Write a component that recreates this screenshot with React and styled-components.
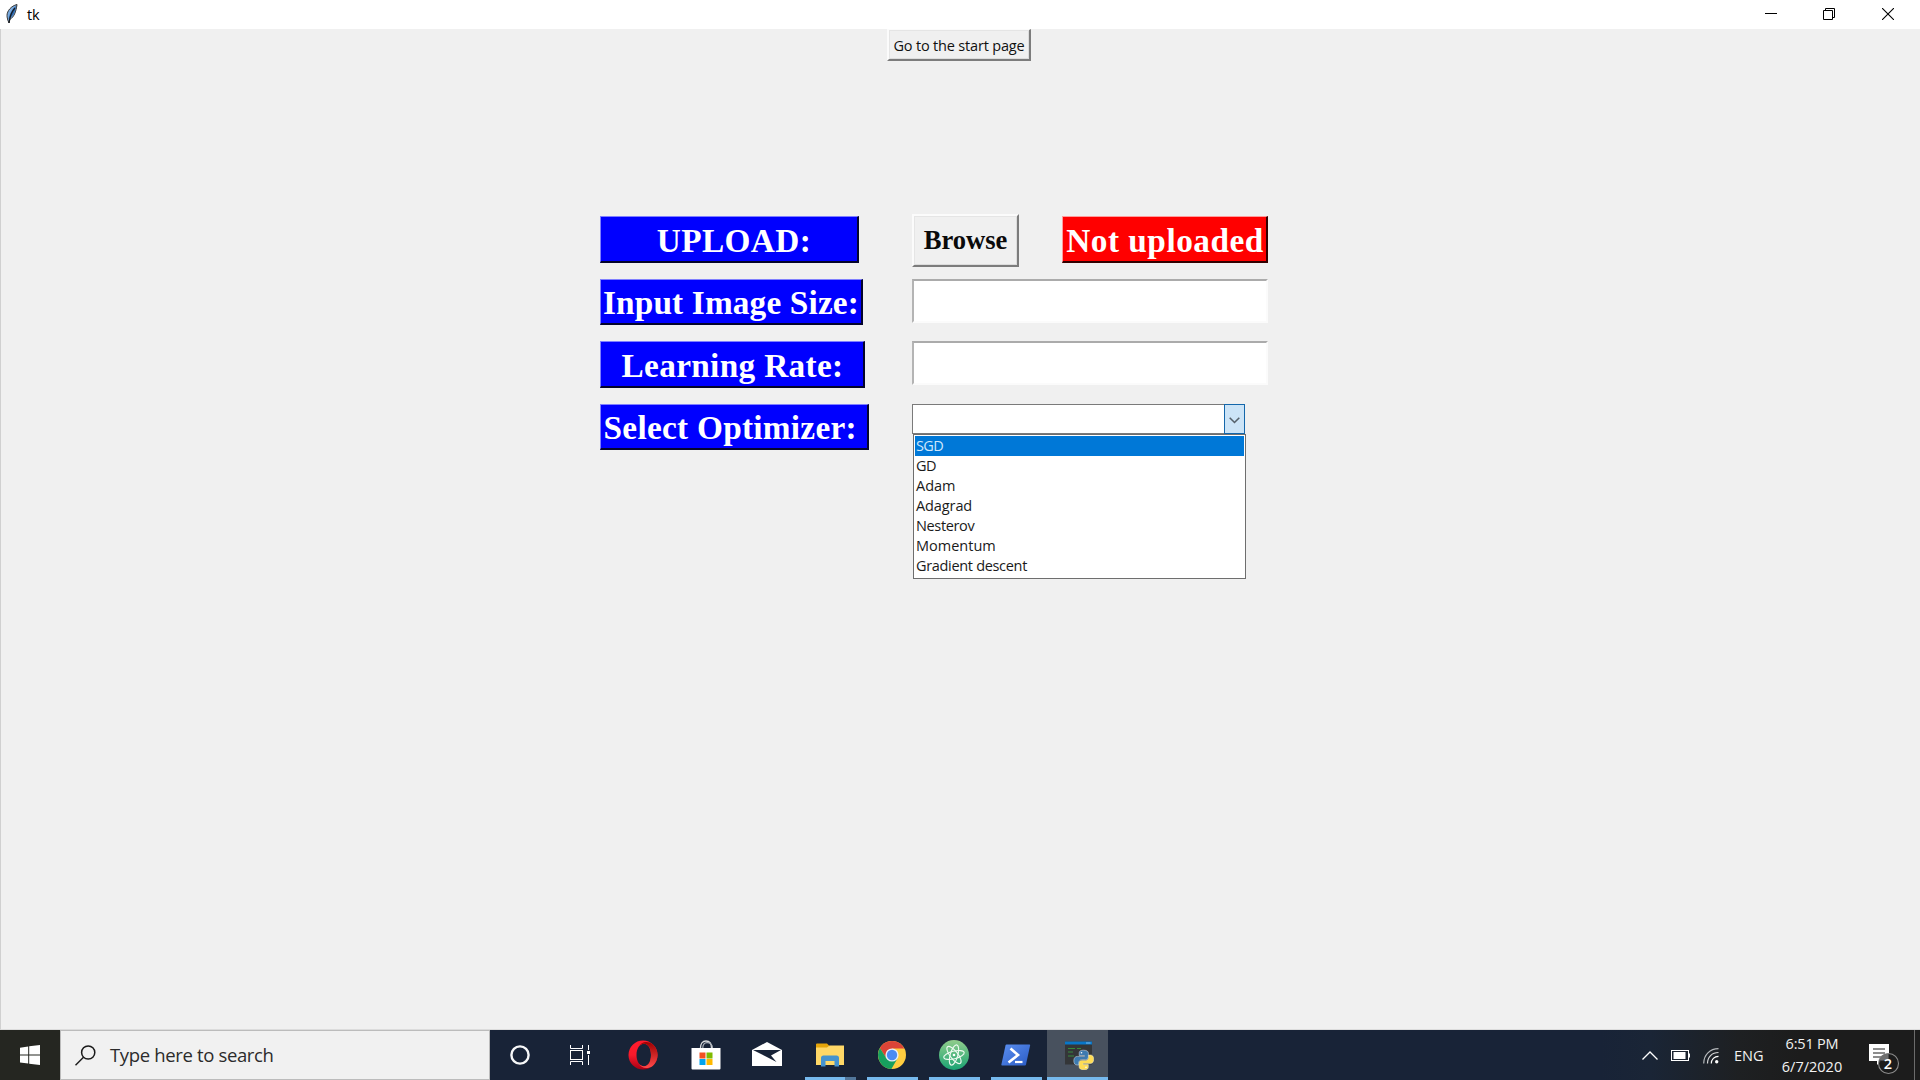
import React from "react";
import styled, { createGlobalStyle, css } from "styled-components";

const Global = createGlobalStyle`
  * { box-sizing: border-box; }
  html, body { margin: 0; padding: 0; overflow: hidden; }
  body { font-family: "Open Sans", "Noto Sans", sans-serif; background: #f0f0f0; }
  svg { display: block; flex: none; }
`;

const Screen = styled.div`
  width: 1920px;
  height: 1080px;
  display: flex;
  flex-direction: column;
  background: #f0f0f0;
`;

const TitleBar = styled.header`
  height: 29px;
  flex: none;
  display: flex;
  align-items: flex-start;
  justify-content: space-between;
  background: #fff;
  padding: 0 2px 0 5px;
`;

const TitleName = styled.div`
  display: flex;
  align-items: center;
  gap: 9px;
  height: 28px;
  font-size: 14.5px;
  line-height: 20px;
  letter-spacing: -0.2px;
  color: #000;
`;

const TitleText = styled.span`
  padding-top: 1px;
`;

const WindowControls = styled.div`
  display: flex;
`;

const ControlButton = styled.div`
  width: ${(p) => p.$w}px;
  height: 28px;
  display: flex;
  align-items: center;
  justify-content: center;
`;

const Client = styled.main`
  flex: 1;
  min-height: 0;
  border-left: 1px solid #d0d0d0;
  border-bottom: 1px solid #dcdcdc;
  display: flex;
  flex-direction: column;
`;

const raised = css`
  border-style: solid;
  border-width: 2px;
  border-color: #fbfbfb #7c7c7c #7c7c7c #fbfbfb;
  box-shadow: inset 1px 1px 0 #e5e5e5, inset -1px -1px 0 #dcdcdc;
`;

const StartPageButton = styled.button`
  ${raised}
  margin: 0 0 0 886px;
  width: 144px;
  height: 32px;
  flex: none;
  padding: 1px 0 0;
  border-top-width: 1px;
  border-radius: 0;
  background: #f0f0f0;
  font-family: inherit;
  font-size: 14.5px;
  letter-spacing: ${(p) => p.$spacing}px;
  white-space: nowrap;
  color: #111;
`;

const Form = styled.section`
  margin: 153px 0 0 599px;
  display: grid;
  grid-template-columns: 312px 356px;
  grid-template-rows: 65px 62px 63px 180px;
`;

const Cell = styled.div`
  padding-top: ${(p) => p.$top || 0}px;
  display: flex;
  align-items: flex-start;
`;

const Tag = styled.div`
  width: ${(p) => p.$w}px;
  height: ${(p) => p.$h || 46}px;
  flex: none;
  display: flex;
  align-items: center;
  justify-content: center;
  border-style: solid;
  border-width: 1px 2px 2px 1px;
  border-color: ${(p) => (p.$red ? "#ff9c9c #300 #300 #ff9c9c" : "#8080ff #04042c #04042c #8080ff")};
  background: ${(p) => (p.$red ? "#ff0000" : "#0000ff")};
  color: #fff;
  font-family: "Liberation Serif", serif;
  font-weight: bold;
  font-size: 33.3px;
  line-height: 42px;
  letter-spacing: ${(p) => p.$spacing || 0}px;
  white-space: pre;
  padding: ${(p) => p.$padTop || 2}px 0 0 ${(p) => p.$padLeft || 0}px;
`;

const UploadRow = styled(Cell)`
  justify-content: space-between;
`;

const BrowseButton = styled.button`
  ${raised}
  width: 107px;
  height: 53px;
  padding: 0 0 1px;
  border-radius: 0;
  background: #f0f0f0;
  font-family: "Liberation Serif", serif;
  font-weight: bold;
  font-size: 26.6px;
  color: #0a0a0a;
`;

const Entry = styled.input`
  width: 356px;
  height: 44px;
  border-style: solid;
  border-width: 2px;
  border-color: #ababab #fbfbfb #fbfbfb #b4b4b4;
  border-radius: 0;
  background: #fff;
  outline: none;
`;

const Combo = styled.div`
  display: flex;
  flex-direction: column;
  width: 334px;
`;

const ComboField = styled.div`
  width: 333px;
  height: 30px;
  display: flex;
  justify-content: flex-end;
  background: #fff;
  border: 1px solid #7a7a7a;
`;

const ComboArrow = styled.div`
  width: 21px;
  height: 30px;
  margin: -1px -1px 0 0;
  padding: 2px 1px 0 0;
  border: 1px solid #1467ab;
  background: #cce4f7;
  display: flex;
  align-items: center;
  justify-content: center;
`;

const Options = styled.ul`
  list-style: none;
  margin: 0 0 0 1px;
  width: 333px;
  height: 145px;
  padding: 1px;
  border: 1px solid #6e6e6e;
  background: #fff;
`;

const Option = styled.li`
  height: 20px;
  padding-left: 1px;
  font-size: 14.5px;
  line-height: 20px;
  letter-spacing: ${(p) => p.$spacing}px;
  white-space: nowrap;
  color: ${(p) => (p.$active ? "#cfe7fb" : "#1a1a1a")};
  background: ${(p) => (p.$active ? "#0078d7" : "transparent")};
`;

const Taskbar = styled.footer`
  height: 50px;
  flex: none;
  display: flex;
  background: linear-gradient(90deg, #182337 0, #182337 1600px, #1a2536 1650px, #1e2022 1740px, #1c1c1c 1800px);
`;

const StartButton = styled.div`
  width: 60px;
  display: flex;
  align-items: center;
  justify-content: center;
  background: #252621;
`;

const SearchBox = styled.div`
  width: 430px;
  display: flex;
  align-items: center;
  gap: 14px;
  padding-left: 14px;
  border: 1px solid #bcbcbc;
  background: #f1f1f1;
  color: #2b2b2b;
  font-size: 18.5px;
  letter-spacing: -0.35px;
`;

const SearchHint = styled.span`
  padding-bottom: 2px;
`;

const TaskSlot = styled.div`
  width: ${(p) => p.$w || 62}px;
  height: 50px;
  display: flex;
  flex-direction: column;
  align-items: center;
  background: ${(p) => (p.$active ? "#48515e" : "transparent")};
`;

const SlotIcon = styled.div`
  height: 47px;
  padding: 3px 0 0 ${(p) => (p.$active ? 2 : 0)}px;
  display: flex;
  align-items: center;
`;

const Running = styled.div`
  width: ${(p) => (p.$active ? 61 : 51)}px;
  height: 3px;
  background: ${(p) => (p.$stacked ? "linear-gradient(90deg, #76b9ed 40px, #52779b 40px)" : "#76b9ed")};
`;

const Tray = styled.div`
  margin-left: auto;
  display: flex;
  align-items: center;
  color: #f2f2f2;
`;

const TrayIcon = styled.div`
  width: ${(p) => p.$w}px;
  padding-top: ${(p) => p.$top || 0}px;
`;

const Language = styled.div`
  width: 46px;
  font-size: 14.5px;
  letter-spacing: 0;
`;

const Clock = styled.div`
  width: 64px;
  margin-right: 25px;
  padding-bottom: 1px;
  display: flex;
  flex-direction: column;
  align-items: center;
  font-size: 14.5px;
  line-height: 23px;
  white-space: nowrap;
`;

const ClockLine = styled.span`
  letter-spacing: ${(p) => p.$spacing}px;
`;

const Peek = styled.div`
  width: 6px;
  height: 50px;
  border-left: 1px solid #6b6b6b;
`;

const Feather = () => (
  <svg width="13" height="20" viewBox="0 0 13 20">
    <path d="M12 .5C6 2 2 7 2 11.500c0 2 .5 3 .8 4.500L4 19l.8-3.500C9 13 11 8 12 .5Z" fill="#79aade" stroke="#343434" strokeWidth="1" />
    <path d="M11 2C7 5 5 9 3.500 15c4-2 6.500-6 7.500-13Z" fill="#2966ae" />
    <path d="M10 4C7 7 5 11 4 19" stroke="#15191f" strokeWidth="1.200" fill="none" />
  </svg>
);

const WinLogo = () => (
  <svg width="20" height="20" viewBox="0 0 20 20" fill="#fff">
    <path d="M0 2.700 8.200 1.500V9.500H0ZM9.200 1.350 20 0V9.500H9.200ZM0 10.500H8.200V18.600L0 17.400ZM9.200 10.500H20V20L9.200 18.700Z" />
  </svg>
);

const SearchIcon = () => (
  <svg width="21" height="21" viewBox="0 0 21 21" fill="none" stroke="#1a1a1a" strokeWidth="1.500">
    <circle cx="13.200" cy="7.500" r="6.600" />
    <path d="M8.500 12.200.500 20.200" />
  </svg>
);

const Cortana = () => (
  <svg width="20" height="20" viewBox="0 0 20 20">
    <circle cx="10" cy="10" r="8.600" fill="none" stroke="#f6f7f8" strokeWidth="2.400" />
  </svg>
);

const TaskView = () => (
  <svg width="20" height="20" viewBox="0 0 20 20" fill="none" stroke="#fff" strokeWidth="1">
    <path d="M.5 0V3.500H12.500V0M.5 20V16.500H12.500V20" />
    <rect x=".5" y="5.500" width="12" height="9" />
    <path d="M18.500 0V5M18.500 10V20" />
    <rect x="17" y="6" width="3" height="3" fill="#fff" stroke="none" />
  </svg>
);

const Opera = () => (
  <svg width="30" height="30" viewBox="0 0 30 30">
    <defs>
      <linearGradient id="opA" x1="0" y1="0" x2="0" y2="1">
        <stop offset="0" stopColor="#ff1b2d" />
        <stop offset=".5" stopColor="#f81a2b" />
        <stop offset="1" stopColor="#a70014" />
      </linearGradient>
      <linearGradient id="opB" x1="0" y1="0" x2="0" y2="1">
        <stop offset="0" stopColor="#9c0000" />
        <stop offset="1" stopColor="#ff4b4b" />
      </linearGradient>
    </defs>
    <path fillRule="evenodd" fill="url(#opA)" d="M15 .5a14.500 14.500 0 1 0 0 29 14.500 14.500 0 0 0 0-29Zm1 3.300c4.500 0 7 5 7 11.200s-2.500 11.200-7 11.200S8.500 21.200 8.500 15 11.500 3.800 16 3.800Z" />
    <path fill="url(#opB)" d="M10.500 6.500C12 4.600 14 3.800 16 3.800c4.500 0 7 5 7 11.200s-2.500 11.200-7 11.200c-2 0-4-.8-5.500-2.700 2.500 4.300 8.500 6.300 14.200 2.400A14.500 14.500 0 0 0 24.700 4.200C19 0 13 2.200 10.500 6.500Z" />
  </svg>
);

const Store = () => (
  <svg width="30" height="30" viewBox="0 0 30 30">
    <path d="M9.500 8C9.500 3.500 11.500 1 15 1s5.500 2.500 5.500 7" fill="none" stroke="#d8dadd" strokeWidth="1.300" />
    <path d="M11.800 8c0-3.500 1.500-5.300 4.200-5.300S21.500 4.500 21.500 8" fill="none" stroke="#aab0b8" strokeWidth="1.200" />
    <path d="M.500 8H29.500V28.500q0 1-1 1H1.500q-1 0-1-1Z" fill="#fff" />
    <rect x="8.500" y="12.500" width="6" height="6" fill="#f25022" />
    <rect x="15.500" y="12.500" width="6" height="6" fill="#7fba00" />
    <rect x="8.500" y="19" width="6" height="6" fill="#00a4ef" />
    <rect x="15.500" y="19" width="6" height="6" fill="#ffb900" />
  </svg>
);

const Mail = () => (
  <svg width="30" height="26" viewBox="0 0 30 26">
    <path d="M0 8 15 0 30 8V24H0Z" fill="#fff" />
    <path d="M1 8H29L19 13.500 24.500 20Z" fill="#182337" />
  </svg>
);

const Folder = () => (
  <svg width="28" height="25" viewBox="0 0 28 25">
    <path d="M0 22V1.500Q0 .5 1 .5H11l2.500 2.500H28V22Z" fill="#e5a50a" />
    <path d="M0 4.500H11L13.500 2.500H28V22H0Z" fill="#ffd867" />
    <path d="M5 23.500V15q0-2.500 2.500-2.500h13Q23 12.500 23 15v8.500h-4.500V18H9.500v5.500Z" fill="#4593cf" />
  </svg>
);

const Chrome = () => (
  <svg width="28" height="28" viewBox="0 0 28 28">
    <circle cx="14" cy="14" r="14" fill="#ffcd40" />
    <path d="M14 14 14 7.500H26.400A14 14 0 0 0 1.900 7L8.400 17.300Z" fill="#db4437" />
    <path d="M1.900 7A14 14 0 0 0 13.400 28L19.600 17.300 14 14 8.400 17.300Z" fill="#17a05e" />
    <circle cx="14" cy="14" r="6.600" fill="#e9eef6" />
    <circle cx="14" cy="14" r="5.200" fill="#4b8bf4" />
  </svg>
);

const Atom = () => (
  <svg width="30" height="30" viewBox="0 0 30 30">
    <defs>
      <linearGradient id="atA" x1="0" y1="0" x2="0" y2="1">
        <stop offset="0" stopColor="#91cd8b" />
        <stop offset="1" stopColor="#19a373" />
      </linearGradient>
    </defs>
    <circle cx="15" cy="15" r="15" fill="url(#atA)" />
    <g fill="none" stroke="#eefaf1" strokeWidth="1.100">
      <ellipse cx="15" cy="15" rx="10.500" ry="3.800" transform="rotate(-14 15 15)" />
      <ellipse cx="15" cy="15" rx="10.500" ry="3.800" transform="rotate(52 15 15)" />
      <ellipse cx="15" cy="15" rx="10.500" ry="3.800" transform="rotate(106 15 15)" />
    </g>
    <circle cx="15" cy="15" r="1.300" fill="#fff" />
  </svg>
);

const PowerShell = () => (
  <svg width="30" height="22" viewBox="0 0 30 22">
    <defs>
      <linearGradient id="psA" x1="0" y1="0" x2="1" y2="1">
        <stop offset="0" stopColor="#5b8ff0" />
        <stop offset="1" stopColor="#2a5bc4" />
      </linearGradient>
    </defs>
    <path d="M5.500.5H28.500q.8 0 .6 1L25 20.500q-.3 1-1 1H1q-.8 0-.6-1L4.500 1.500q.3-1 1-1Z" fill="url(#psA)" />
    <path d="M9.500 4.500 17 11 7.500 18.500" fill="none" stroke="#fff" strokeWidth="2.600" />
    <path d="M14 18H21.500" stroke="#fff" strokeWidth="2.200" />
  </svg>
);

const PythonConsole = () => (
  <svg width="30" height="30" viewBox="0 0 30 30">
    <rect x="1" y="1.500" width="27" height="23" fill="#343638" />
    <rect x="1" y="1.500" width="27" height="3" fill="#0877c9" />
    <path d="M22 3h4.500" stroke="#7cb9e8" strokeWidth="1" />
    <path d="M4 8.500h7M4 12h5M13 8.500h4M4 16h6" stroke="#378a3c" strokeWidth="1.200" />
    <path fill="#3d7ab0" stroke="#dce5ec" strokeWidth=".5" d="M19.500 10.200c-3.800 0-4.300 1.600-4.300 3v2.300h5.200v.9h-7c-2.200 0-3.600 1.600-3.600 4.400 0 2.900 1.500 4.200 3.300 4.200h1.800v-2.500c0-1.600 1.300-2.900 2.900-2.900h4c1.400 0 2.600-1.100 2.600-2.600v-3.800c0-1.600-1.300-3-4.900-3Z" />
    <path fill="#ffdc55" stroke="#f7f2d0" strokeWidth=".5" d="M20 29.800c3.800 0 4.300-1.600 4.300-3v-2.300h-5.200v-.9h7c2.200 0 3.600-1.600 3.600-4.400 0-2.900-1.500-4.200-3.300-4.200h-1.800v2.500c0 1.600-1.300 2.900-2.900 2.900h-4c-1.400 0-2.600 1.100-2.600 2.600v3.800c0 1.600 1.300 3 4.900 3Z" />
    <circle cx="17.500" cy="12.800" r=".8" fill="#fff" />
    <circle cx="22" cy="27.200" r=".8" fill="#fff" />
  </svg>
);

const Notifications = () => (
  <svg width="31" height="32" viewBox="0 0 31 32">
    <path d="M0 0H20V17H12L8 21V17H0Z" fill="#fff" />
    <path d="M4 5h12M4 9h12M4 13h8" stroke="#1c1c1c" strokeWidth="1.200" />
    <circle cx="19.500" cy="19.500" r="10" fill="#1c1c1c" fillOpacity=".94" stroke="#8b8b8b" strokeWidth="1.100" />
    <path d="M10 16.500A10 10 0 0 1 19.500 9.500V16.500Z" fill="#6f6f6f" />
    <text x="19" y="24.500" textAnchor="middle" fontFamily="Open Sans, sans-serif" fontWeight="600" fontSize="14.500" fill="#fff">2</text>
  </svg>
);

const options = [
  ["SGD", -0.6],
  ["GD", -0.5],
  ["Adam", 0],
  ["Adagrad", -0.1],
  ["Nesterov", -0.36],
  ["Momentum", 0],
  ["Gradient descent", -0.32],
];

const apps = [
  { name: "cortana", icon: <Cortana />, w: 60 },
  { name: "taskview", icon: <TaskView />, w: 60 },
  { name: "opera", icon: <Opera />, w: 66 },
  { name: "store", icon: <Store />, w: 59 },
  { name: "mail", icon: <Mail />, w: 64 },
  { name: "explorer", icon: <Folder />, running: true, stacked: true },
  { name: "chrome", icon: <Chrome />, running: true },
  { name: "atom", icon: <Atom />, running: true },
  { name: "powershell", icon: <PowerShell />, running: true },
  { name: "python", icon: <PythonConsole />, running: true, active: true, w: 61 },
];

export default function App() {
  return (
    <Screen>
      <Global />
      <TitleBar>
        <TitleName>
          <Feather />
          <TitleText>tk</TitleText>
        </TitleName>
        <WindowControls>
          <ControlButton $w={58}>
            <svg width="12" height="12" viewBox="0 0 12 12"><path d="M0 5.500H12" stroke="#000" /></svg>
          </ControlButton>
          <ControlButton $w={58}>
            <svg width="12" height="12" viewBox="0 0 12 12" fill="none" stroke="#000">
              <path d="M.5 2.500H9.500V11.500H.5ZM2.500 2.500V.5H11.500V9.500H9.500" />
            </svg>
          </ControlButton>
          <ControlButton $w={60}>
            <svg width="12" height="12" viewBox="0 0 12 12"><path d="M0 0 12 12M12 0 0 12" stroke="#000" strokeWidth="1.100" /></svg>
          </ControlButton>
        </WindowControls>
      </TitleBar>

      <Client>
        <StartPageButton $spacing={-0.18}>Go to the start page</StartPageButton>
        <Form>
          <Cell $top={2}><Tag $w={259} $h={47} $padTop={3} $padLeft={10} $spacing={0.4}>UPLOAD:</Tag></Cell>
          <UploadRow>
            <BrowseButton>Browse</BrowseButton>
            <Cell $top={2}><Tag $red $w={206} $h={47} $padTop={3} $padLeft={1} $spacing={0.5}>Not uploaded</Tag></Cell>
          </UploadRow>
          <Cell><Tag $w={263} $spacing={0.15}>Input Image Size:</Tag></Cell>
          <Cell><Entry /></Cell>
          <Cell><Tag $w={265} $h={47} $padTop={3} $padLeft={1} $spacing={0.33}>Learning Rate:</Tag></Cell>
          <Cell><Entry /></Cell>
          <Cell><Tag $w={269} $padLeft={1} $spacing={0.27}>{"Select Optimizer: "}</Tag></Cell>
          <Cell>
            <Combo>
              <ComboField>
                <ComboArrow>
                  <svg width="11" height="7" viewBox="0 0 11 7"><path d="M.7.8 5.500 5.500 10.300.8" fill="none" stroke="#56616b" strokeWidth="1.600" /></svg>
                </ComboArrow>
              </ComboField>
              <Options>
                {options.map(([label, spacing], i) => (
                  <Option key={label} $active={i === 0} $spacing={spacing}>{label}</Option>
                ))}
              </Options>
            </Combo>
          </Cell>
        </Form>
      </Client>

      <Taskbar>
        <StartButton><WinLogo /></StartButton>
        <SearchBox>
          <SearchIcon />
          <SearchHint>Type here to search</SearchHint>
        </SearchBox>
        {apps.map((a) => (
          <TaskSlot key={a.name} $w={a.w} $active={a.active}>
            <SlotIcon $active={a.active}>{a.icon}</SlotIcon>
            {a.running && <Running $active={a.active} $stacked={a.stacked} />}
          </TaskSlot>
        ))}
        <Tray>
          <TrayIcon $w={29}>
            <svg width="16" height="9" viewBox="0 0 16 9"><path d="M.5 8.500 8 1 15.500 8.500" fill="none" stroke="#fff" strokeWidth="1.300" /></svg>
          </TrayIcon>
          <TrayIcon $w={32} $top={1}>
            <svg width="19" height="11" viewBox="0 0 19 11">
              <rect x=".5" y=".5" width="17" height="10" fill="none" stroke="#fff" />
              <rect x="2.500" y="2" width="12" height="7" fill="#fff" />
              <rect x="18" y="3.500" width="1" height="4" fill="#fff" />
            </svg>
          </TrayIcon>
          <TrayIcon $w={31} $top={1}>
            <svg width="16" height="16" viewBox="0 0 16 16" fill="none" strokeWidth="1.200">
              <path d="M.7 15.500C.7 7 7 .7 15.500.7" stroke="#b5b8bb" />
              <path d="M4.500 15.500c0-6.500 4.500-11 11-11" stroke="#d8d9da" />
              <path d="M8.300 15.500c0-4.200 3-7.200 7.200-7.200" stroke="#fff" />
              <circle cx="13.700" cy="13.700" r="1.700" fill="#fff" />
            </svg>
          </TrayIcon>
          <Language>ENG</Language>
          <Clock>
            <ClockLine $spacing={-0.2}>6:51 PM</ClockLine>
            <ClockLine $spacing={0}>6/7/2020</ClockLine>
          </Clock>
          <TrayIcon $w={45} $top={9}>
            <Notifications />
          </TrayIcon>
          <Peek />
        </Tray>
      </Taskbar>
    </Screen>
  );
}
